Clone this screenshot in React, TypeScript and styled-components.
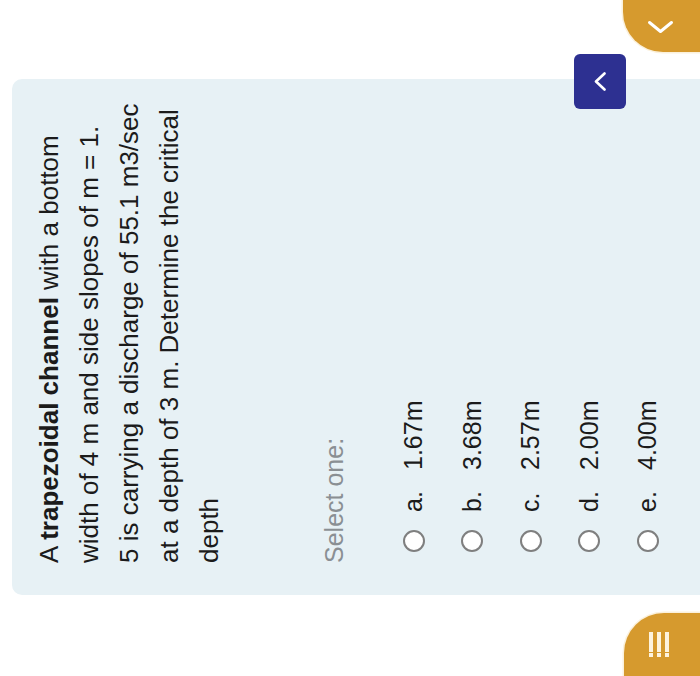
import React from "react";
import styled, { createGlobalStyle } from "styled-components";

const Global = createGlobalStyle`
  html, body { margin: 0; padding: 0; background: #ffffff; overflow: hidden; }
  body { width: 700px; height: 676px; }
`;

const Viewport = styled.div`
  position: relative;
  width: 700px;
  height: 676px;
  overflow: hidden;
  background: #ffffff;
`;

/* The phone screen is photographed turned on its side: lay it out upright, then rotate it. */
const Screen = styled.div`
  position: absolute;
  left: 0;
  top: 0;
  width: 676px;
  height: 700px;
  box-sizing: border-box;
  padding: 12px 79px 0 81px;
  transform-origin: 0 0;
  transform: translateY(676px) rotate(-90deg);
  font-family: "Liberation Sans", Arial, Helvetica, sans-serif;
  color: #1b1b1b;
  overflow: hidden;
`;

const Card = styled.section`
  box-sizing: border-box;
  width: 516px;
  height: 740px;
  background: #e7f1f5;
  border-radius: 10px;
  padding: 17px 32px 0 32px;
  display: flex;
  flex-direction: column;
`;

const Question = styled.p`
  margin: 0;
  font-size: 26px;
  line-height: 40px;
  color: #1b1b1b;
  white-space: nowrap;
`;

const Prompt = styled.div`
  margin-top: 90px;
  font-size: 25px;
  line-height: 30px;
  color: #8a8f93;
`;

const Options = styled.div`
  margin-top: 35.5px;
  display: flex;
  flex-direction: column;
`;

const OptionRow = styled.label`
  display: flex;
  align-items: center;
  height: 58.5px;
  font-size: 25px;
  color: #1b1b1b;
`;

const Radio = styled.span`
  box-sizing: border-box;
  width: 22px;
  height: 22px;
  border-radius: 50%;
  border: 2.5px solid #7f7f7f;
  background: #ffffff;
  margin-left: 11px;
  margin-right: 18px;
  flex: none;
`;

const Letter = styled.span`
  width: 42px;
  flex: none;
`;

const BackTop = styled.button`
  position: absolute;
  left: 567px;
  top: 574px;
  width: 55px;
  height: 52px;
  border: none;
  border-radius: 6px;
  background: #2d3091;
  display: flex;
  align-items: center;
  justify-content: center;
  padding: 0;
`;

const Bubble = styled.button<{ $side: "left" | "right" }>`
  position: absolute;
  top: ${(p) => (p.$side === "right" ? "623px" : "624px")};
  left: ${(p) => (p.$side === "right" ? "624px" : "-20px")};
  width: 83px;
  height: 110px;
  border: none;
  padding: 0;
  background: #d69a2e;
  border-radius: ${(p) => (p.$side === "right" ? "40px 0 0 0" : "0 40px 0 0")};
  box-shadow: 0 0 0 1.5px #fbf1dc;
`;

const BubbleIcon = styled.svg<{ $x: number; $y: number }>`
  position: absolute;
  left: ${(p) => p.$x}px;
  top: ${(p) => p.$y}px;
  overflow: visible;
`;

const options = [
  ["a.", "1.67m"],
  ["b.", "3.68m"],
  ["c.", "2.57m"],
  ["d.", "2.00m"],
  ["e.", "4.00m"],
];

export default function App() {
  return (
    <>
      <Global />
      <Viewport>
        <Screen>
          <Card>
            <Question>
              A <b>trapezoidal channel</b> with a bottom
              <br />
              width of 4 m and side slopes of m = 1.
              <br />
              5 is carrying a discharge of 55.1 m3/sec
              <br />
              at a depth of 3 m. Determine the critical
              <br />
              depth
            </Question>
            <Prompt>Select one:</Prompt>
            <Options>
              {options.map(([l, v]) => (
                <OptionRow key={l}>
                  <Radio />
                  <Letter>{l}</Letter>
                  <span>{v}</span>
                </OptionRow>
              ))}
            </Options>
          </Card>

          <BackTop aria-label="Back to top">
            <svg width="19" height="12" viewBox="0 0 19 12">
              <polyline
                points="1.5,10.5 9.5,2 17.5,10.5"
                fill="none"
                stroke="#ffffff"
                strokeWidth="2.6"
                strokeLinecap="round"
                strokeLinejoin="round"
              />
            </svg>
          </BackTop>

          <Bubble $side="right" aria-label="Previous">
            <BubbleIcon $x={19} $y={25} width="12" height="25" viewBox="0 0 12 25">
              <polyline
                points="10.5,1.5 1.5,12.5 10.5,23.5"
                fill="none"
                stroke="#ffffff"
                strokeWidth="3"
                strokeLinecap="round"
                strokeLinejoin="round"
              />
            </BubbleIcon>
          </Bubble>

          <Bubble $side="left" aria-label="Quiz navigation">
            <BubbleIcon $x={39} $y={25} width="26" height="20" viewBox="0 0 26 20">
              <rect x="0" y="0" width="4" height="4" fill="#fdf3de" />
              <rect x="5" y="0" width="20" height="4" fill="#fdf3de" />
              <rect x="0" y="8" width="4" height="4" fill="#fdf3de" />
              <rect x="5" y="8" width="20" height="4" fill="#fdf3de" />
              <rect x="0" y="16" width="4" height="4" fill="#fdf3de" />
              <rect x="5" y="16" width="20" height="4" fill="#fdf3de" />
            </BubbleIcon>
          </Bubble>
        </Screen>
      </Viewport>
    </>
  );
}
